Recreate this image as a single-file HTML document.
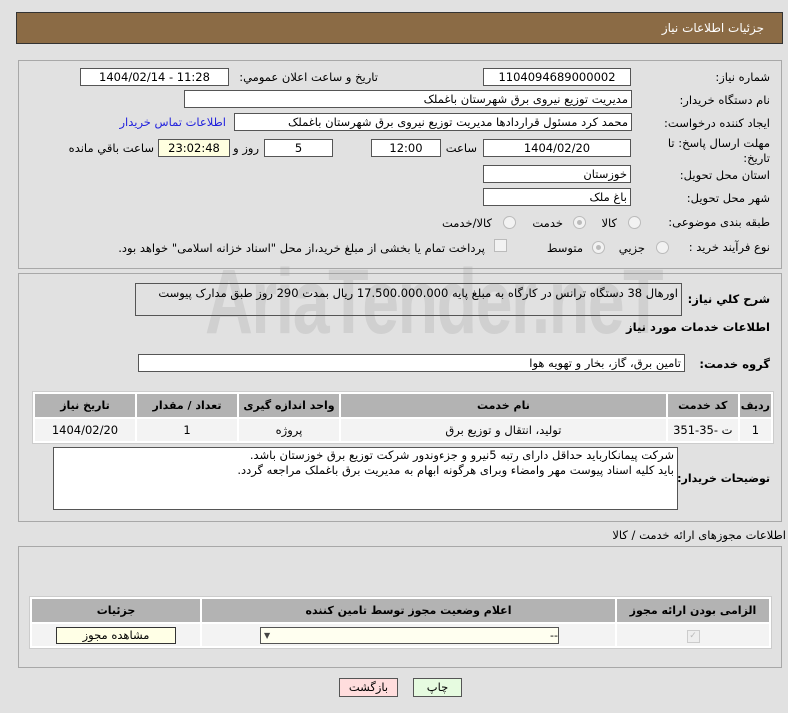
<!DOCTYPE html>
<html><head><meta charset="utf-8"><style>
body{margin:0;width:788px;height:713px;background:#e1e1e1;font-family:"DejaVu Sans","Liberation Sans",sans-serif;font-size:11.5px;color:#000;position:relative;overflow:hidden}
.a{position:absolute}
.hdr{left:16px;top:12px;width:765px;height:30px;background:#8b6b45;border:1px solid #333}
.hdr span{position:absolute;right:18px;top:8px;color:#fff;font-size:12px}
.pn{border:1px solid #a8a8a8;background:#e1e1e1}
.in{position:absolute;background:#fff;border:1px solid #555;height:16px;line-height:16px;box-sizing:content-box;direction:rtl;font-size:11.5px;white-space:nowrap;overflow:hidden}
.c{text-align:center}
.r{padding-right:3px}
.lb{position:absolute;direction:rtl;white-space:nowrap;font-size:11.5px}
.rad{position:absolute;width:11px;height:11px;border-radius:50%;border:1px solid #bbb;background:#f2f2f2}
.rad.on::after{content:"";position:absolute;left:3px;top:3px;width:5px;height:5px;border-radius:50%;background:#bbb}
table{border-collapse:separate;border-spacing:2px;position:absolute;background:#fff;border:1px solid #ccc}
th{background:#b3b3b3;font-weight:bold;font-size:11px;height:21px}
td{background:#f3f3f3;text-align:center;height:20px;font-size:11.5px}
.wm{position:absolute;left:205px;top:250px;font-size:92px;font-weight:bold;color:rgba(150,150,150,.22);font-family:"Liberation Sans",sans-serif;letter-spacing:-2px;transform:scaleX(.72);transform-origin:left}
</style></head><body>
<div class="a hdr"><span>جزئیات اطلاعات نیاز</span></div>

<div class="a pn" style="left:18px;top:60px;width:762px;height:207px"></div>
<div class="lb" style="right:18px;top:70px">شماره نیاز:</div>
<div class="in c" style="left:483px;top:68px;width:146px">1104094689000002</div>
<div class="lb" style="right:410px;top:70px">تاریخ و ساعت اعلان عمومي:</div>
<div class="in c" style="left:80px;top:68px;width:147px;direction:ltr">1404/02/14 - 11:28</div>

<div class="lb" style="right:18px;top:93px">نام دستگاه خريدار:</div>
<div class="in r" style="left:184px;top:90px;width:443px">مديريت توزيع نيروی برق شهرستان باغملک</div>

<div class="lb" style="right:18px;top:116px">ايجاد کننده درخواست:</div>
<div class="in r" style="left:234px;top:113px;width:393px">محمد کرد مسئول قراردادها مديريت توزيع نيروی برق شهرستان باغملک</div>
<div class="lb" style="right:562px;top:115px;color:#2222dd">اطلاعات تماس خريدار</div>

<div class="lb" style="right:18px;top:136px">مهلت ارسال پاسخ: تا</div>
<div class="lb" style="right:18px;top:151px">تاريخ:</div>
<div class="in c" style="left:483px;top:139px;width:146px">1404/02/20</div>
<div class="lb" style="right:311px;top:141px">ساعت</div>
<div class="in c" style="left:371px;top:139px;width:68px">12:00</div>
<div class="in c" style="left:264px;top:139px;width:67px">5</div>
<div class="lb" style="right:529px;top:141px">روز و</div>
<div class="in c" style="left:158px;top:139px;width:70px;background:#ffffe0">23:02:48</div>
<div class="lb" style="right:634px;top:141px">ساعت باقي مانده</div>

<div class="lb" style="right:18px;top:168px">استان محل تحويل:</div>
<div class="in r" style="left:483px;top:165px;width:143px">خوزستان</div>
<div class="lb" style="right:18px;top:191px">شهر محل تحويل:</div>
<div class="in r" style="left:483px;top:188px;width:143px">باغ ملک</div>

<div class="lb" style="right:18px;top:215px">طبقه بندی موضوعی:</div>
<div class="rad" style="left:628px;top:216px"></div><div class="lb" style="right:171px;top:216px">کالا</div>
<div class="rad on" style="left:573px;top:216px"></div><div class="lb" style="right:225px;top:216px">خدمت</div>
<div class="rad" style="left:503px;top:216px"></div><div class="lb" style="right:296px;top:216px">کالا/خدمت</div>

<div class="lb" style="right:18px;top:240px">نوع فرآيند خريد :</div>
<div class="rad" style="left:656px;top:241px"></div><div class="lb" style="right:143px;top:241px">جزيي</div>
<div class="rad on" style="left:592px;top:241px"></div><div class="lb" style="right:205px;top:241px">متوسط</div>
<div class="a" style="left:494px;top:239px;width:11px;height:11px;border:1px solid #bbb;background:#f2f2f2"></div>
<div class="lb" style="right:303px;top:241px">پرداخت تمام يا بخشی از مبلغ خريد،از محل "اسناد خزانه اسلامی" خواهد بود.</div>

<div class="a pn" style="left:18px;top:273px;width:762px;height:247px"></div>
<div class="wm">AriaTender.neT</div>
<div class="lb" style="right:18px;top:292px;font-weight:bold">شرح کلي نياز:</div>
<div class="in r" style="left:135px;top:283px;width:542px;height:31px;line-height:18px;background:transparent">اورهال 38 دستگاه ترانس در کارگاه به مبلغ پايه 17.500.000.000 ريال بمدت 290 روز طبق مدارک پيوست</div>
<div class="lb" style="right:18px;top:320px;font-weight:bold">اطلاعات خدمات مورد نياز</div>
<div class="lb" style="right:18px;top:357px;font-weight:bold">گروه خدمت:</div>
<div class="in r" style="left:138px;top:354px;width:542px">تامين برق، گاز، بخار و تهويه هوا</div>

<table style="left:32px;top:391px;width:742px;direction:rtl">
<tr><th style="width:28px">رديف</th><th style="width:68px">کد خدمت</th><th>نام خدمت</th><th style="width:98px">واحد اندازه گيری</th><th style="width:98px">تعداد / مقدار</th><th style="width:98px">تاريخ نياز</th></tr>
<tr><td>1</td><td>ت -35-351</td><td>توليد، انتقال و توزيع برق</td><td>پروژه</td><td>1</td><td>1404/02/20</td></tr>
</table>

<div class="lb" style="right:18px;top:472px;font-weight:bold;font-size:11px">توضيحات خريدار:</div>
<div class="in r" style="left:53px;top:447px;width:620px;height:61px;line-height:15px;white-space:normal">شرکت پیمانکارباید حداقل دارای رتبه 5نیرو و جزءوندور شرکت توزیع برق خوزستان باشد.<br>باید کلیه اسناد پیوست مهر وامضاء وبرای هرگونه ابهام به مدیریت برق باغملک مراجعه گردد.</div>

<div class="lb" style="right:2px;top:528px">اطلاعات مجوزهای ارائه خدمت / کالا</div>
<div class="a pn" style="left:18px;top:546px;width:762px;height:120px"></div>
<table style="left:29px;top:596px;width:743px;direction:rtl">
<tr><th style="width:150px">الزامی بودن ارائه مجوز</th><th>اعلام وضعيت مجوز توسط تامين کننده</th><th style="width:166px">جزئيات</th></tr>
<tr><td><span style="display:inline-block;width:11px;height:11px;border:1px solid #ccc;background:#eee;color:#bbb;font-size:9px;line-height:11px">✓</span></td>
<td><div style="margin:0 auto 0 57px;width:297px;height:15px;border:1px solid #555;background:#fffff0;text-align:right;font-size:11px;line-height:15px;position:relative">--&nbsp;<span style="position:absolute;left:3px;top:0;font-size:8px;color:#444">▼</span></div></td>
<td><div style="margin:0 auto;width:118px;height:15px;border:1px solid #333;background:#ffffe6;line-height:15px">مشاهده مجوز</div></td></tr>
</table>

<div class="a c" style="left:339px;top:678px;width:57px;height:17px;line-height:17px;background:#fdd;border:1px solid #555">بازگشت</div>
<div class="a c" style="left:413px;top:678px;width:47px;height:17px;line-height:17px;background:#e6fbe0;border:1px solid #555">چاپ</div>
</body></html>
